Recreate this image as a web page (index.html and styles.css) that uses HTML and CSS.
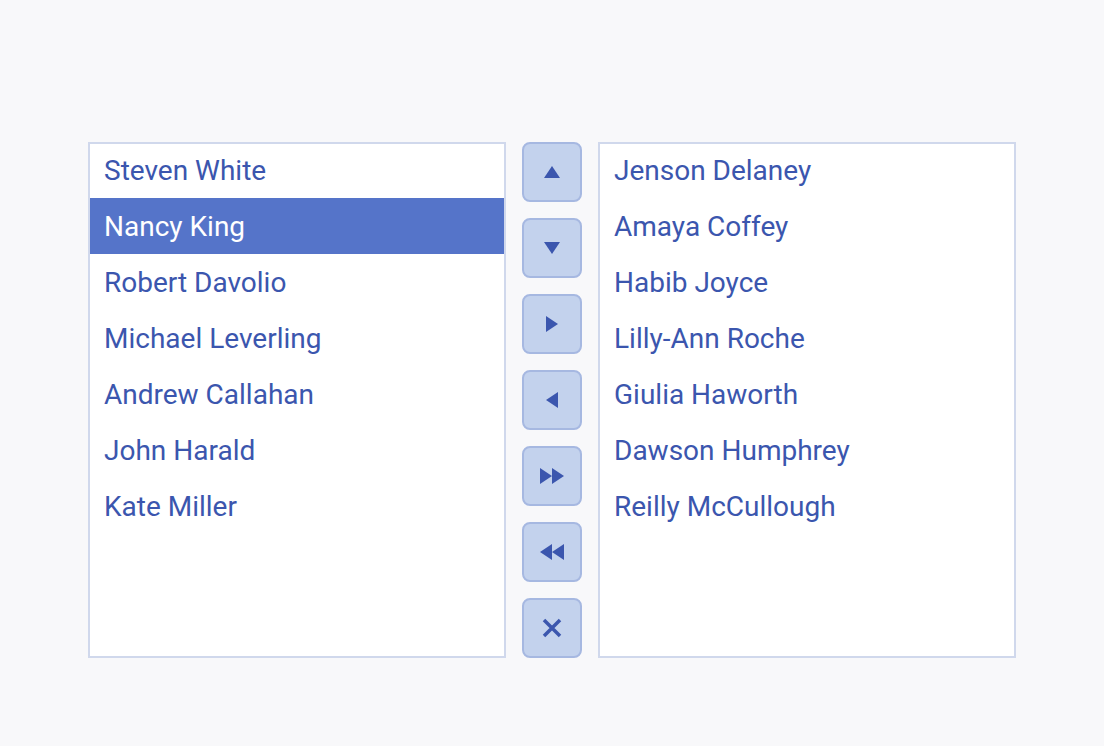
FILE: index.html
```html
<!DOCTYPE html>
<html lang="en">
<head>
  <meta charset="UTF-8" />
  <title>List Box</title>
  <link rel="stylesheet" href="styles.css">
</head>
<body>
  <div class="dual-list">
    <!-- Source list -->
    <ul class="list-box">
      <li class="list-item">Steven White</li>
      <li class="list-item selected">Nancy King</li>
      <li class="list-item">Robert Davolio</li>
      <li class="list-item">Michael Leverling</li>
      <li class="list-item">Andrew Callahan</li>
      <li class="list-item">John Harald</li>
      <li class="list-item">Kate Miller</li>
    </ul>

    <!-- Toolbar -->
    <div class="toolbar">
      <button class="tool-btn" title="Move Up">
        <svg width="16" height="12" viewBox="0 0 16 12"><path d="M8 0 L16 12 L0 12 Z"/></svg>
      </button>
      <button class="tool-btn" title="Move Down">
        <svg width="16" height="12" viewBox="0 0 16 12"><path d="M0 0 L16 0 L8 12 Z"/></svg>
      </button>
      <button class="tool-btn" title="Move To">
        <svg width="12" height="16" viewBox="0 0 12 16"><path d="M0 0 L12 8 L0 16 Z"/></svg>
      </button>
      <button class="tool-btn" title="Move From">
        <svg width="12" height="16" viewBox="0 0 12 16"><path d="M12 0 L0 8 L12 16 Z"/></svg>
      </button>
      <button class="tool-btn" title="Move All To">
        <svg width="24" height="16" viewBox="0 0 24 16"><path d="M0 0 L12 8 L0 16 Z M12 0 L24 8 L12 16 Z"/></svg>
      </button>
      <button class="tool-btn" title="Move All From">
        <svg width="24" height="16" viewBox="0 0 24 16"><path d="M12 0 L0 8 L12 16 Z M24 0 L12 8 L24 16 Z"/></svg>
      </button>
      <button class="tool-btn" title="Remove">
        <svg width="20" height="20" viewBox="0 0 20 20"><path class="cross" d="M2 2 L18 18 M18 2 L2 18"/></svg>
      </button>
    </div>

    <!-- Destination list -->
    <ul class="list-box">
      <li class="list-item">Jenson Delaney</li>
      <li class="list-item">Amaya Coffey</li>
      <li class="list-item">Habib Joyce</li>
      <li class="list-item">Lilly-Ann Roche</li>
      <li class="list-item">Giulia Haworth</li>
      <li class="list-item">Dawson Humphrey</li>
      <li class="list-item">Reilly McCullough</li>
    </ul>
  </div>
</body>
</html>
```

FILE: styles.css
```css
:root {
  --text-color: #3b56ae;
  --border-color: #d0d8ec;
  --selected-bg: #5574c9;
  --btn-bg: #c3d2ed;
  --btn-border: #a6b8e1;
  --bg-color: #f8f8fa;
}

* {
  box-sizing: border-box;
}

body {
  margin: 0;
  padding-top: 142px;
  background: var(--bg-color);
  font-family: Roboto, "Noto Sans", sans-serif;
}

.dual-list {
  display: flex;
  justify-content: center;
  gap: 16px;
}

.list-box {
  list-style: none;
  margin: 0;
  padding: 0;
  width: 418px;
  height: 516px;
  background: #fff;
  border: 2px solid var(--border-color);
  overflow: hidden;
}

.list-item {
  height: 56px;
  padding-left: 14px;
  display: flex;
  align-items: center;
  font-size: 28px;
  color: var(--text-color);
}

.list-item:first-child {
  margin-top: -2px;
}

.list-item.selected {
  background: var(--selected-bg);
  color: #fff;
}

.toolbar {
  display: flex;
  flex-direction: column;
  gap: 16px;
}

.tool-btn {
  width: 60px;
  height: 60px;
  padding: 0;
  display: flex;
  align-items: center;
  justify-content: center;
  background: var(--btn-bg);
  border: 2px solid var(--btn-border);
  border-radius: 8px;
  cursor: pointer;
}

.tool-btn svg {
  fill: var(--text-color);
}

.tool-btn .cross {
  fill: none;
  stroke: var(--text-color);
  stroke-width: 3.5;
}
```
